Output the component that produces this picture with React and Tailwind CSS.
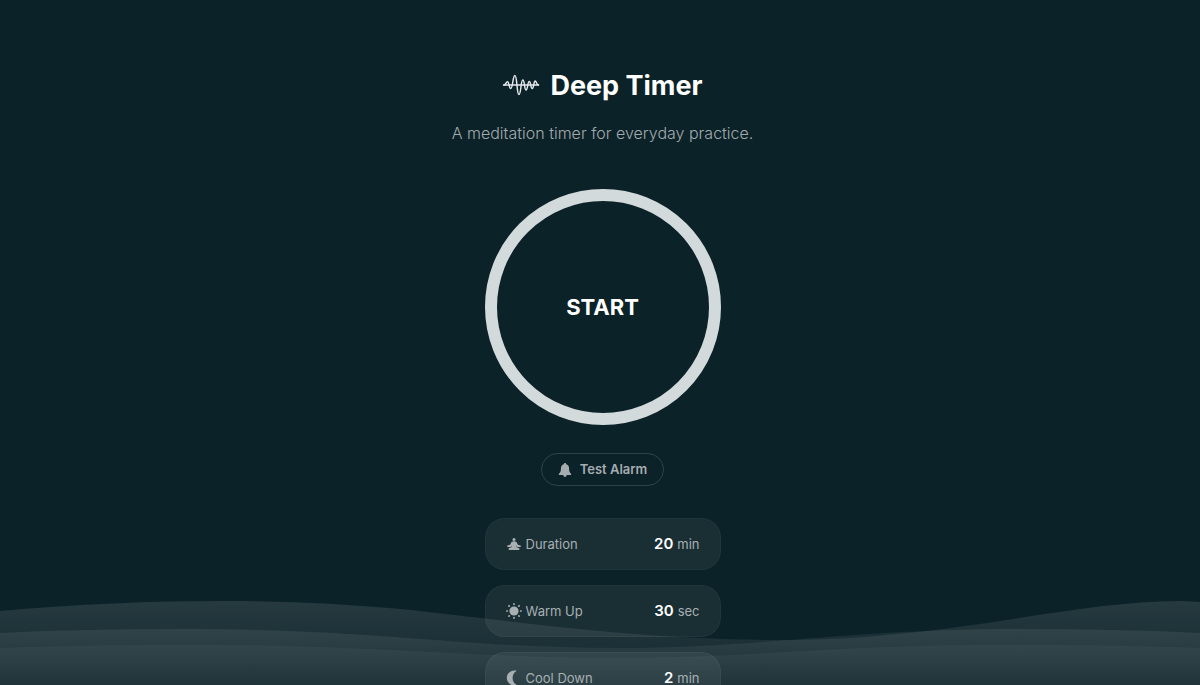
const SETTINGS = [
  { id: "duration", label: "Duration", value: "20", unit: "min", Icon: LotusIcon },
  { id: "warmup", label: "Warm Up", value: "30", unit: "sec", Icon: SunIcon },
  { id: "cooldown", label: "Cool Down", value: "2", unit: "min", Icon: MoonIcon },
]

// =========================
// ICONS
// =========================

function WaveLogo() {
  return (
    <svg viewBox="0 0 38 28" className="h-7 w-[38px] text-gray-200" fill="none" stroke="currentColor" strokeLinecap="round" strokeLinejoin="round" aria-hidden="true">
      <path d="M1.500 13H36.500" strokeWidth="1.300" />
      <path
        strokeWidth="1.500"
        d="M2 13C4 13 4 9.800 5.500 9.800C7.200 9.800 7 16.500 8.700 16.500C10.900 16.500 10.700 3.500 12.900 3.500C15.200 3.500 14.700 22.500 16.900 22.500C19.200 22.500 18.700 8 20.800 8C22.800 8 22.200 18 24 18C25.800 18 25.600 9.500 27.200 9.500C29 9.500 28.500 16.500 30.200 16.500C31.900 16.500 31.700 9 33.200 9C34.500 9 34.200 13 36.500 13"
      />
    </svg>
  )
}

function BellIcon() {
  return (
    <svg viewBox="0 0 14 16" className="h-4 w-3.5" fill="currentColor" aria-hidden="true">
      <path d="M7 1C6.300 1 5.900 1.500 5.900 2.200C3.900 2.700 2.900 4.400 2.900 6.500C2.900 9.500 2.300 10.600 1 11.700C.5 12.200 .8 13 1.500 13H12.500C13.200 13 13.500 12.200 13 11.700C11.700 10.600 11.100 9.500 11.100 6.500C11.100 4.400 10.100 2.700 8.100 2.200C8.100 1.500 7.700 1 7 1ZM5.300 13C5.500 14.200 6.100 15 7 15C7.900 15 8.500 14.200 8.700 13Z" />
    </svg>
  )
}

function LotusIcon() {
  return (
    <svg viewBox="0 0 16 16" className="size-4" fill="currentColor" aria-hidden="true">
      <circle cx="8" cy="3.600" r="1.500" />
      <path d="M8 5.300C6.300 5.300 5.300 6 4.900 7.200L4.100 8.800L1.500 9.500C.8 9.800 1 11 1.800 11L4.800 10.900L5.800 10V11L3.200 12C2 12.700 2.400 14 3.700 14H12.300C13.600 14 14 12.700 12.800 12L10.200 11V10L11.200 10.900L14.200 11C15 11 15.200 9.800 14.500 9.500L11.900 8.800L11.100 7.200C10.700 6 9.700 5.300 8 5.300Z" />
    </svg>
  )
}

function SunIcon() {
  return (
    <svg viewBox="0 0 16 16" className="size-4" fill="currentColor" aria-hidden="true">
      <circle cx="8" cy="8" r="4.600" />
      <path
        fill="none"
        stroke="currentColor"
        strokeWidth="1.700"
        strokeLinecap="round"
        d="M8 .9V1.300M8 14.700V15.100M.9 8H1.300M14.700 8H15.100M2.900 2.900L3.200 3.200M12.800 12.800L13.100 13.100M2.900 13.100L3.200 12.800M12.800 3.200L13.100 2.900"
      />
    </svg>
  )
}

function MoonIcon() {
  return (
    <svg viewBox="0 0 16 16" className="size-4" fill="currentColor" aria-hidden="true">
      <path d="M10.500 .9C7.800 2.500 6.600 5 6.600 8C6.600 11 8 13.700 11.300 15.200C10.300 15.500 9.200 15.600 8.200 15.500C4 15.200 .8 12 .8 8C.8 3.500 4.500 .3 8.800 .4C9.700 .4 10.400 .5 10.500 .9Z" />
    </svg>
  )
}

// =========================
// BACKGROUND WAVES
// =========================

function Waves() {
  return (
    <svg viewBox="0 0 1200 85" preserveAspectRatio="none" className="absolute bottom-0 left-0 h-[85px] w-full" aria-hidden="true">
      <defs>
        <linearGradient id="wave-back" gradientUnits="userSpaceOnUse" x1="0" y1="0" x2="0" y2="85">
          <stop offset="0" stopColor="#fff" stopOpacity="0.11" />
          <stop offset="1" stopColor="#fff" stopOpacity="0.03" />
        </linearGradient>
        <linearGradient id="wave-mid" gradientUnits="userSpaceOnUse" x1="0" y1="28" x2="0" y2="85">
          <stop offset="0" stopColor="#fff" stopOpacity="0.075" />
          <stop offset="1" stopColor="#fff" stopOpacity="0.03" />
        </linearGradient>
        <linearGradient id="wave-front" gradientUnits="userSpaceOnUse" x1="0" y1="44" x2="0" y2="85">
          <stop offset="0" stopColor="#fff" stopOpacity="0.045" />
          <stop offset="1" stopColor="#fff" stopOpacity="0.025" />
        </linearGradient>
      </defs>
      <path fill="url(#wave-back)" d="M0 11C80 4 150 1 225 1C290 1 345 4 400 9C500 19 630 40 780 40C950 40 1070 1 1180 1L1200 2V85H0Z" />
      <path fill="url(#wave-mid)" d="M0 33C60 30 120 29 180 29C380 29 460 48 620 48C760 48 850 29 1020 29C1080 29 1140 30 1200 33V85H0Z" />
      <path fill="url(#wave-front)" d="M0 48C60 46 120 45 190 45C380 45 470 58 620 58C760 58 820 45 1010 45C1080 45 1140 46 1200 48V85H0Z" />
    </svg>
  )
}

// =========================
// PAGE
// =========================

function App() {
  return (
    <div className="relative h-screen overflow-hidden bg-[#0b2228] font-['Inter',sans-serif] text-white">

      <Waves />

      <main className="relative flex flex-col items-center pt-[69px] pl-[5px]">

        {/* HEADER */}
        <header className="text-center">
          <h1 className="flex items-center justify-center gap-2.5 text-[27px] leading-[34px] font-bold">
            <WaveLogo />
            Deep Timer
          </h1>
          <p className="mt-[18px] text-base leading-6 font-light text-[#a4abaf]">
            A meditation timer for everyday practice.
          </p>
        </header>

        {/* START */}
        <button
          type="button"
          className="mt-11 size-[236px] rounded-full border-12 border-[#d3dadc] text-[22px] font-bold"
        >
          START
        </button>

        <button
          type="button"
          className="mt-7 flex h-[33px] items-center gap-2 rounded-full border border-white/15 px-4 text-[13px] font-semibold text-[#a6adb1]"
        >
          <BellIcon />
          Test Alarm
        </button>

        {/* SETTINGS */}
        <div className="mt-8 flex w-[236px] flex-col gap-[15px]">
          {SETTINGS.map(({ id, label, value, unit, Icon }) => (
            <button
              key={id}
              type="button"
              className="flex h-[52px] items-center rounded-[20px] border border-white/4 bg-white/6 px-5 text-[13px] text-[#a9b0b3]"
            >
              <Icon />
              <span className="ml-1 pt-px">{label}</span>
              <span className="ml-auto flex items-baseline gap-1">
                <span className="text-[15px] font-semibold text-white">{value}</span>
                {unit}
              </span>
            </button>
          ))}
        </div>

      </main>

    </div>
  )
}

export default App
